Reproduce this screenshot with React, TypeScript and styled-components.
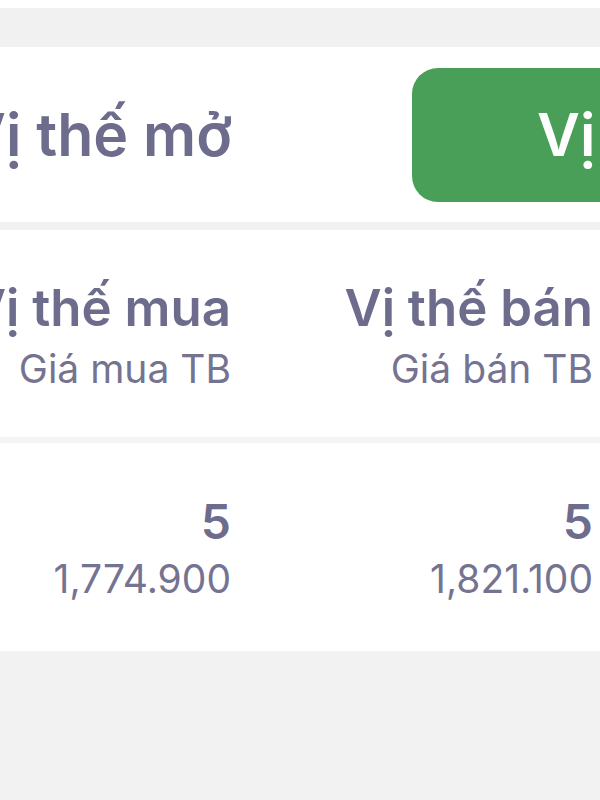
import React from "react";
import styled, { createGlobalStyle } from "styled-components";

const GlobalStyle = createGlobalStyle`
  html, body {
    margin: 0;
    padding: 0;
    background: #f2f2f3;
    overflow: hidden;
  }
  body {
    font-family: Inter, "Noto Sans", "Liberation Sans", sans-serif;
    -webkit-font-smoothing: antialiased;
  }
`;

const Page = styled.div`
  width: 600px;
  height: 800px;
  display: flex;
  flex-direction: column;
  background: #f2f2f3;
  overflow: hidden;
`;

const TopStrip = styled.div`
  height: 8px;
  background: #ffffff;
  flex-shrink: 0;
`;

const Band = styled.div<{ $h: number; $bg?: string }>`
  height: ${(p) => p.$h}px;
  background: ${(p) => p.$bg ?? "#f1f1f2"};
  flex-shrink: 0;
`;

const TabBar = styled.div`
  height: 175px;
  background: #ffffff;
  display: flex;
  align-items: center;
  flex-shrink: 0;
  overflow: hidden;
`;

const Tab = styled.div`
  width: 232px;
  flex-shrink: 0;
  display: flex;
  justify-content: flex-end;
  white-space: nowrap;
  font-size: 59px;
  font-weight: 600;
  color: #6d6c8d;
`;

const ActiveTab = styled.div`
  margin-left: 180px;
  flex-shrink: 0;
  width: 360px;
  height: 134px;
  border-radius: 26px;
  background: #4a9f58;
  display: flex;
  align-items: center;
  padding-left: 125px;
  box-sizing: border-box;
  white-space: nowrap;
  font-size: 59px;
  font-weight: 600;
  color: #ffffff;
`;

const Row = styled.div<{ $h: number; $top: number }>`
  height: ${(p) => p.$h}px;
  padding-top: ${(p) => p.$top}px;
  box-sizing: border-box;
  background: #ffffff;
  display: grid;
  grid-template-columns: 231px 362px;
  align-items: start;
  flex-shrink: 0;
  overflow: hidden;
`;

const Cell = styled.div`
  display: flex;
  flex-direction: column;
  align-items: flex-end;
  white-space: nowrap;
  color: #6d6c8d;
`;

const Title = styled.div`
  font-size: 51px;
  line-height: 58px;
  font-weight: 600;
`;

const Sub = styled.div<{ $gap: number }>`
  margin-top: ${(p) => p.$gap}px;
  font-size: 39px;
  line-height: 48px;
  font-weight: 400;
  color: #747391;
`;

const Value = styled.div`
  font-size: 48px;
  line-height: 56px;
  font-weight: 600;
`;

const columns = [
  { title: "Vị thế mua", sub: "Giá mua TB", qty: "5", price: "1,774.900" },
  { title: "Vị thế bán", sub: "Giá bán TB", qty: "5", price: "1,821.100" },
];

export default function App() {
  return (
    <>
      <GlobalStyle />
      <Page>
        <TopStrip />
        <Band $h={39} />
        <TabBar>
          <Tab>Vị thế mở</Tab>
          <ActiveTab>Vị thế đóng</ActiveTab>
        </TabBar>
        <Band $h={8} />
        <Row $h={207} $top={49}>
          {columns.map((c) => (
            <Cell key={c.title}>
              <Title>{c.title}</Title>
              <Sub $gap={8}>{c.sub}</Sub>
            </Cell>
          ))}
        </Row>
        <Band $h={6} $bg="#f5f5f6" />
        <Row $h={208} $top={51}>
          {columns.map((c) => (
            <Cell key={c.price}>
              <Value>{c.qty}</Value>
              <Sub $gap={5}>{c.price}</Sub>
            </Cell>
          ))}
        </Row>
      </Page>
    </>
  );
}
